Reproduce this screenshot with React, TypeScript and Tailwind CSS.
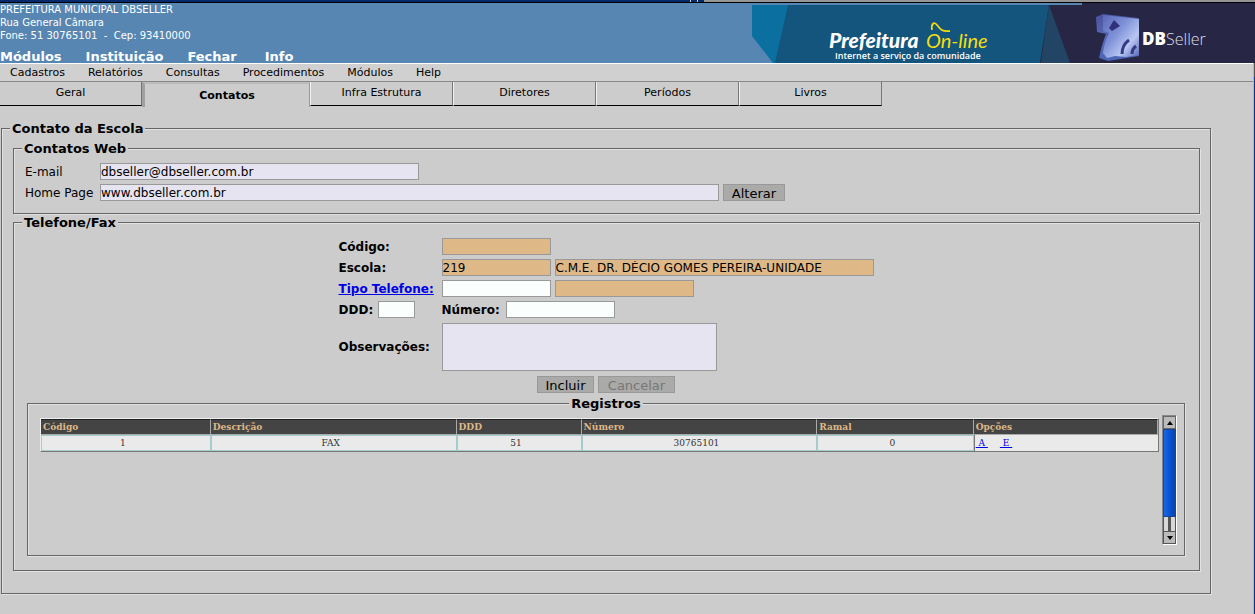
import type { ReactNode } from "react";

const field = "h-[17px] border border-[#999] pt-px text-xs leading-[15px] text-black outline-none";
const tan = "bg-[#deb887]";
const lilac = "bg-[#e6e4f1]";
const white = "bg-[#fafffd]";
const button = "h-[17px] border border-[#999] bg-[#aaaaa8] pt-px text-[13px] leading-[15px]";

type GroupProps = { title: string; className?: string; body: string; center?: boolean; children: ReactNode };

function Group({ title, className = "", body, center, children }: GroupProps) {
  return (
    <fieldset className={`min-w-0 border border-[#666] shadow-[1px_1px_0_#e2e2e2,inset_1px_1px_0_#e2e2e2] ${className}`}>
      <legend className={`h-[15px] bg-[#ccc] px-0.5 text-[13px] leading-4 font-bold ${center ? "mx-auto" : "ml-2"}`}>{title}</legend>
      <div className={body}>{children}</div>
    </fieldset>
  );
}

function Banner() {
  return (
    <svg className="h-[60px] w-[503px] shrink-0" viewBox="752 3 503 60" role="img" aria-label="Prefeitura On-line DBSeller">
      <defs>
        <linearGradient id="cube" x1="0" y1="0" x2="1" y2="1">
          <stop offset="0" stopColor="#5a68b8" />
          <stop offset=".4" stopColor="#7f92d8" />
          <stop offset=".7" stopColor="#b8c6f2" />
          <stop offset="1" stopColor="#5363b4" />
        </linearGradient>
        <linearGradient id="side" x1="0" y1="0" x2="0" y2="1">
          <stop offset="0" stopColor="#4a529c" />
          <stop offset=".5" stopColor="#5868b4" />
          <stop offset="1" stopColor="#4a66b8" />
        </linearGradient>
      </defs>
      <path d="M752 5H1082V63H774L752 34Z" fill="#14557d" />
      <path d="M752 5H788L775 63H773L752 36Z" fill="#0b6f9f" />
      <path d="M1082 3H1255V63H1040L1049 5H1082Z" fill="#272644" />
      <path d="M1049 5L1070 63H1041Z" fill="#224565" />
      <g fontFamily="Lato, sans-serif" fontStyle="italic">
        <text x="829" y="48" fontSize="21" fontWeight="900" fill="#fff">Prefeitura</text>
        <text x="926" y="48" fontSize="20" fill="#f4df10">On-line</text>
      </g>
      <path d="M932 30C931 24 934 21 937 25S942 32 950 31" fill="none" stroke="#f4d810" strokeWidth="1.8" />
      <text x="835" y="59" fontFamily="Open Sans, sans-serif" fontSize="9" fontWeight="600" fill="#fff">Internet a serviço da comunidade</text>
      <path d="M1096 17L1103 14L1139 18V56L1108 61L1099 58Q1102 44 1106 34L1097 32Z" fill="url(#side)" />
      <path d="M1103 15L1139 19V55L1126 57L1115 56L1107 58L1103 53Q1104 43 1109 33L1103 31Z" fill="url(#cube)" />
      <path d="M1114 20L1120 26L1112 31L1109 28Z" fill="#30307b" />
      <path d="M1122 54Q1122 45 1129 40M1132 54Q1132 49 1136 46" fill="none" stroke="#353b83" strokeWidth="3" />
      <text x="1142" y="45" fontFamily="Open Sans, sans-serif" fontSize="17" fontWeight="800" fill="#fff">DB</text>
      <text x="1166" y="45" fontFamily="Open Sans, sans-serif" fontSize="16" fontWeight="300" fill="#ddddec">Seller</text>
    </svg>
  );
}

function Tab({ children }: { children: ReactNode }) {
  return (
    <button type="button" className="h-6 w-[143px] border-r border-b border-l border-r-[#777] border-b-black border-l-[#f2f2f2] text-[11px]">
      {children}
    </button>
  );
}

const columns = [
  ["Código", "w-[15.2%]"],
  ["Descrição", "w-[22%]"],
  ["DDD", "w-[11.2%]"],
  ["Número", "w-[21.1%]"],
  ["Ramal", "w-[14%]"],
  ["Opções", "w-[16.5%]"],
];

export default function App() {
  return (
    <div className="flex min-h-screen flex-col bg-[#ccc] font-['DejaVu_Sans',sans-serif] text-black">
      <div className="flex h-[3px] border-b border-black">
        <div className="w-[55%] bg-[#06296b]" />
        <div className="mx-px w-1.5 bg-[#06296b]" />
        <div className="w-1.5 bg-[#06296b]" />
        <div className="flex-1 bg-[#959595]" />
      </div>
      <header className="flex h-[60px] justify-between overflow-hidden bg-[#5786b2] text-white">
        <div className="flex flex-col">
          <div className="text-[10px] leading-[13px] whitespace-pre">
            <p>PREFEITURA MUNICIPAL DBSELLER</p>
            <p>Rua General Câmara</p>
            <p>{"Fone: 51 30765101  -  Cep: 93410000"}</p>
          </div>
          <nav className="mt-[7px] flex gap-6 text-[13px] leading-4 font-bold">
            <a href="#modulos">Módulos</a>
            <a href="#instituicao">Instituição</a>
            <a href="#fechar">Fechar</a>
            <a href="#info" className="ml-1">Info</a>
          </nav>
        </div>
        <Banner />
      </header>

      <div className="flex flex-1">
        <div className="min-w-0 flex-1 border-r border-[#b5b5b5]">
          <nav className="flex h-[19px] gap-[23px] border-t border-b border-t-white border-b-[#888] bg-[#d0d0d0] pl-2.5 text-[11px] leading-[17px]">
            <a href="#cadastros">Cadastros</a>
            <a href="#relatorios">Relatórios</a>
            <a href="#consultas">Consultas</a>
            <a href="#procedimentos">Procedimentos</a>
            <a href="#modulos-menu">Módulos</a>
            <a href="#help">Help</a>
          </nav>
          <div className="flex items-start">
            <button type="button" className="h-6 w-[142px] border-r border-b border-r-[#777] border-b-black text-[11px]">Geral</button>
            <button type="button" className="h-[25px] w-[168px] border-t-2 border-r border-l-[3px] border-t-[#bbb] border-r-[#999] border-l-[#a0a0a0] pt-px text-[11px] font-bold">Contatos</button>
            <Tab>Infra Estrutura</Tab>
            <Tab>Diretores</Tab>
            <Tab>Períodos</Tab>
            <Tab>Livros</Tab>
          </div>

          <main className="mt-[14px] mr-[42px] ml-px">
            <Group title="Contato da Escola" body="pt-[5px] pr-2.5 pb-[22px] pl-[11px]">
              <Group title="Contatos Web" body="px-[11px] pt-[7px] pb-3">
                <div className="flex flex-col gap-1">
                  <div className="flex items-center">
                    <label htmlFor="email" className="w-[75px] text-xs leading-4">E-mail</label>
                    <input id="email" defaultValue="dbseller@dbseller.com.br" className={`w-[319px] ${field} ${lilac}`} />
                  </div>
                  <div className="flex items-center">
                    <label htmlFor="home" className="w-[75px] text-xs leading-4">Home Page</label>
                    <input id="home" defaultValue="www.dbseller.com.br" className={`w-[619px] ${field} ${lilac}`} />
                    <button type="button" className={`ml-1 w-[62px] ${button}`}>Alterar</button>
                  </div>
                </div>
              </Group>
              <Group title="Telefone/Fax" className="mt-px" body="pt-2 pr-3.5 pb-[14px] pl-[13px]">
                <div className="mx-auto flex w-fit flex-col gap-1 text-xs leading-4">
                  <div className="flex h-[17px] items-center">
                    <label htmlFor="codigo" className="w-[103px] font-bold">Código:</label>
                    <input id="codigo" readOnly className={`w-[109px] ${field} ${tan}`} />
                  </div>
                  <div className="flex h-[17px] items-center">
                    <label htmlFor="escola" className="w-[103px] font-bold">Escola:</label>
                    <input id="escola" readOnly value="219" className={`w-[109px] ${field} ${tan}`} />
                    <input aria-label="Nome da escola" readOnly value="C.M.E. DR. DÉCIO GOMES PEREIRA-UNIDADE" className={`ml-1 w-[319px] ${field} ${tan}`} />
                  </div>
                  <div className="flex h-[17px] items-center">
                    <a href="#tipo" className="w-[103px] font-bold whitespace-nowrap text-[#0000e6] underline">Tipo Telefone:</a>
                    <input aria-label="Tipo Telefone" className={`w-[109px] ${field} ${white}`} />
                    <input aria-label="Descrição do tipo" readOnly className={`ml-1 w-[139px] ${field} ${tan}`} />
                  </div>
                  <div className="flex h-[17px] items-center">
                    <label htmlFor="ddd" className="w-[39px] font-bold">DDD:</label>
                    <input id="ddd" className={`mr-[27px] w-[37px] ${field} ${white}`} />
                    <label htmlFor="numero" className="w-16 font-bold">Número:</label>
                    <input id="numero" className={`w-[109px] ${field} ${white}`} />
                  </div>
                  <div className="flex items-center pt-px">
                    <label htmlFor="obs" className="w-[103px] font-bold">Observações:</label>
                    <textarea id="obs" className={`block h-12 w-[275px] resize-none border border-[#999] outline-none ${lilac}`} />
                  </div>
                </div>
                <div className="mt-[5px] mb-[3px] flex justify-center gap-1">
                  <button type="button" className={`w-[57px] ${button}`}>Incluir</button>
                  <button type="button" disabled className={`w-[77px] text-[#777] ${button}`}>Cancelar</button>
                </div>
                <Group title="Registros" center body="pt-1 pr-[7px] pb-2.5 pl-3">
                  <div className="flex items-start gap-[3px]">
                    <div className="mt-[3px] min-w-0 flex-1 border-t border-r border-b border-l border-t-[#eee] border-r-[#777] border-b-[#777] border-l-[#eee]">
                      <table className="w-full table-fixed border-separate border-spacing-0 font-['DejaVu_Serif',serif] text-[9px] leading-[14px]">
                        <thead>
                          <tr className="bg-[#444] text-left text-[#deb887]">
                            {columns.map(([name, width]) => (
                              <th key={name} className={`h-4 border-t border-r border-b border-t-[#222] border-r-[#aaa] border-b-[#aaa] px-0.5 py-0 ${width}`}>{name}</th>
                            ))}
                          </tr>
                        </thead>
                        <tbody>
                          <tr className="bg-[#eaeaea] text-center text-[#333]">
                            {["1", "FAX", "51", "30765101", "0"].map((value, i) => (
                              <td key={i} className="h-4 border border-[#a5cccc] py-0 pr-1.5 pl-0">{value}</td>
                            ))}
                            <td className="border-l border-[#777] p-0 pl-px text-left whitespace-pre text-[#0000e6]">
                              <a href="#alterar" className="underline"> A </a>
                              <a href="#excluir" className="ml-3 underline"> E </a>
                            </td>
                          </tr>
                        </tbody>
                      </table>
                    </div>
                    <div className="flex h-[130px] w-[15px] flex-col border border-t-[#888] border-r-white border-b-white border-l-[#888] bg-[#555]">
                      <button type="button" aria-label="Subir" className="flex h-[13px] items-center justify-center border border-[#666] bg-[#bbb]">
                        <svg viewBox="0 0 6 4" className="h-1 w-1.5"><path d="M3 0L6 4H0Z" /></svg>
                      </button>
                      <div className="flex-1 border border-[#164796] bg-linear-to-r from-[#1c68dd] via-[#0753da] to-[#0b43a2]" />
                      <div className="flex h-[14px] justify-center border-x border-[#555] bg-[#d8d8d8]"><div className="w-[3px] bg-[#555]" /></div>
                      <button type="button" aria-label="Descer" className="flex h-[13px] items-center justify-center border border-[#555] bg-[#bbb]">
                        <svg viewBox="0 0 6 4" className="h-1 w-1.5"><path d="M0 0H6L3 4Z" /></svg>
                      </button>
                    </div>
                  </div>
                </Group>
              </Group>
            </Group>
          </main>
        </div>
        <div className="w-px border-t-[14px] border-[#555] bg-[#0a3a87]" />
      </div>
    </div>
  );
}
